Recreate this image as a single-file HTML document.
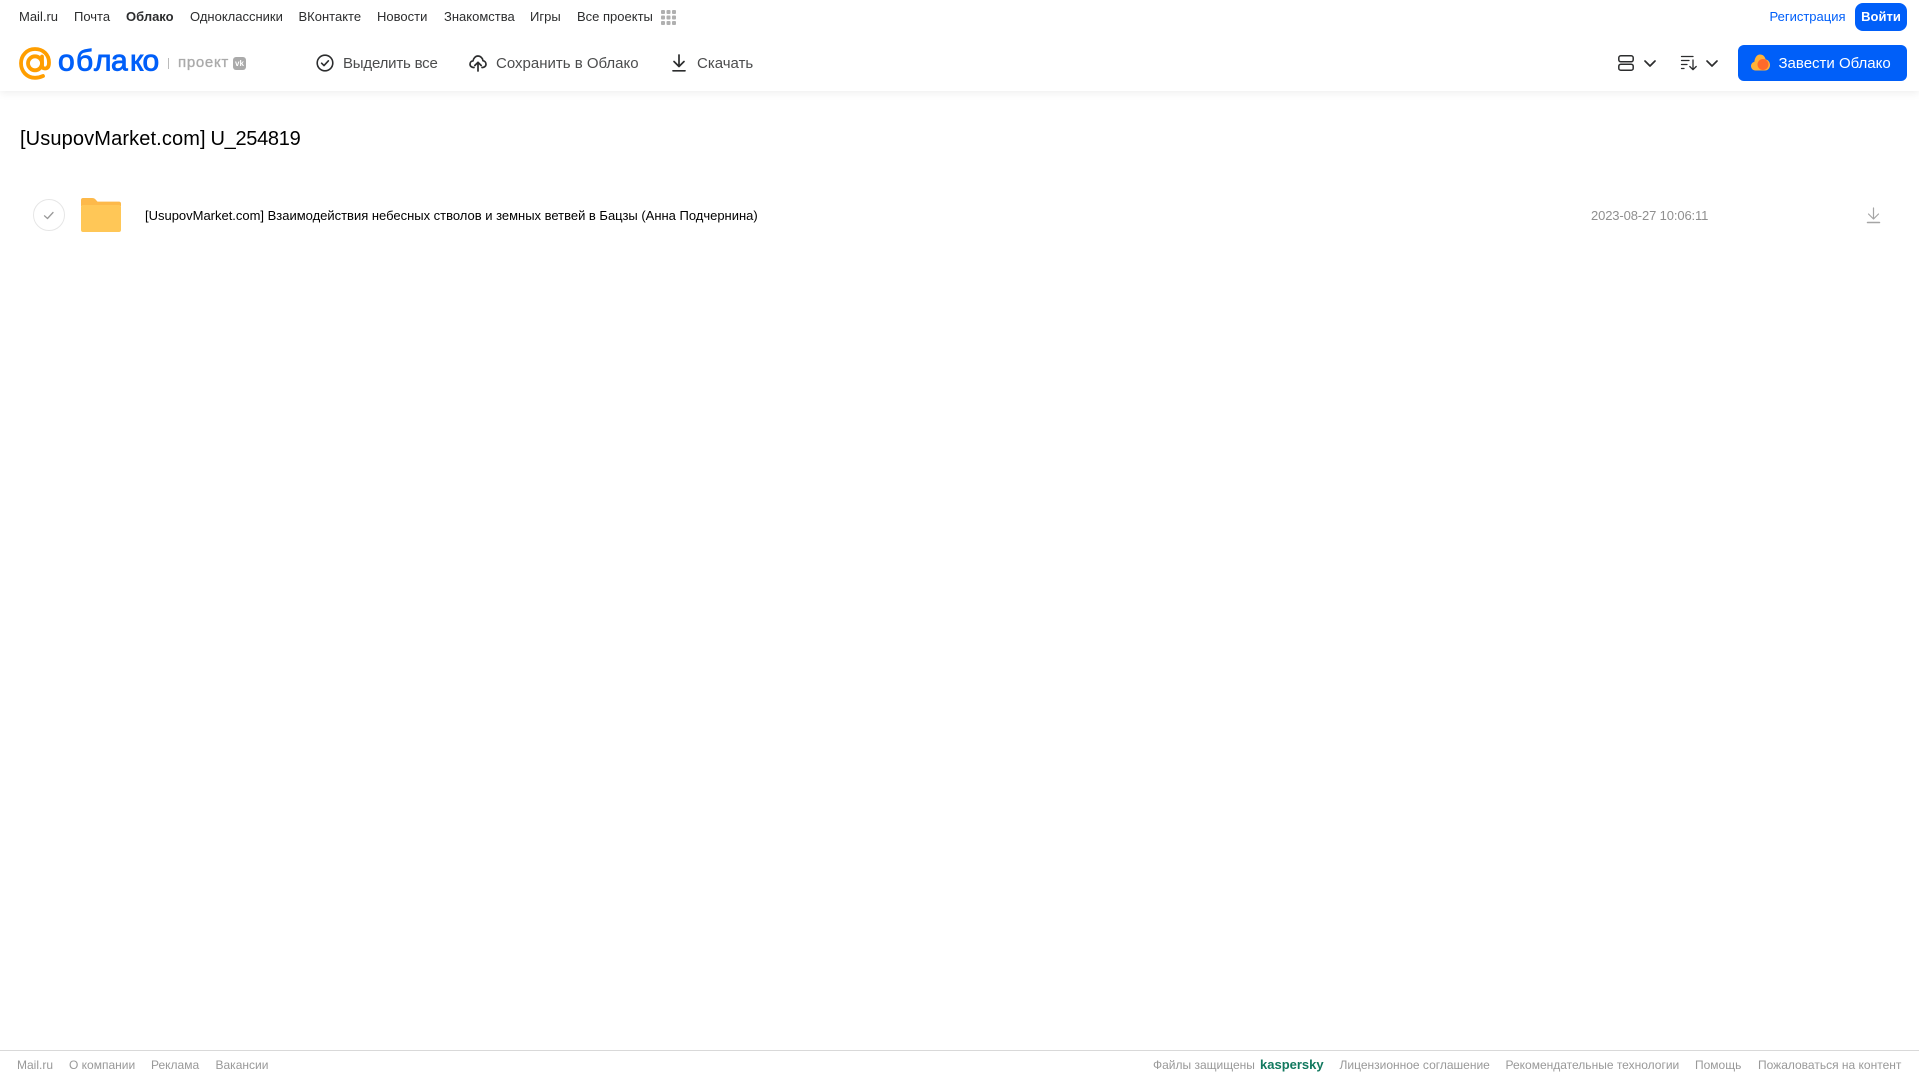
<!DOCTYPE html>
<html lang="ru">
<head>
<meta charset="utf-8">
<title>Облако</title>
<style>
html,body{margin:0;padding:0;background:#fff;}
body{position:relative;width:1919px;height:1079px;overflow:hidden;font-family:"Liberation Sans",sans-serif;}
.t{position:absolute;white-space:nowrap;line-height:20px;}
.n{top:7px;font-size:13px;color:#2c2d2e;}
.b{top:54px;font-size:15px;color:#2c2d2e;opacity:.85;}
.f{top:1055px;font-size:12px;color:#999;}
svg{position:absolute;overflow:visible;}
#hdr{position:absolute;left:0;top:0;width:1919px;height:91px;background:#fff;box-shadow:0 2px 8px rgba(0,0,0,.07);}
</style>
</head>
<body>
<div id="hdr"></div>

<span class="t n" style="left:19px">Mail.ru</span>
<span class="t n" style="left:74px">Почта</span>
<span class="t n" style="left:126px;font-weight:bold">Облако</span>
<span class="t n" style="left:190px">Одноклассники</span>
<span class="t n" style="left:298.5px">ВКонтакте</span>
<span class="t n" style="left:377px">Новости</span>
<span class="t n" style="left:444px">Знакомства</span>
<span class="t n" style="left:530px">Игры</span>
<span class="t n" style="left:577px">Все проекты</span>
<svg style="left:661px;top:10px" width="15" height="15" viewBox="0 0 15 15" fill="#b0b0b0">
<rect x="0" y="0" width="4" height="4" rx="1"/><rect x="5.5" y="0" width="4" height="4" rx="1"/><rect x="11" y="0" width="4" height="4" rx="1"/>
<rect x="0" y="5.5" width="4" height="4" rx="1"/><rect x="5.5" y="5.5" width="4" height="4" rx="1"/><rect x="11" y="5.5" width="4" height="4" rx="1"/>
<rect x="0" y="11" width="4" height="4" rx="1"/><rect x="5.5" y="11" width="4" height="4" rx="1"/><rect x="11" y="11" width="4" height="4" rx="1"/>
</svg>

<span class="t" style="left:1769.5px;top:7px;font-size:13px;color:#005ff9">Регистрация</span>
<div style="position:absolute;left:1855px;top:3px;width:52px;height:28px;border-radius:8px;background:#005ff9;color:#fff;font-size:13px;line-height:27px;text-align:center;font-weight:bold">Войти</div>

<svg style="left:19px;top:47px" width="32" height="33" viewBox="0 0 32 33" fill="none" stroke="#ff9e00">
<circle cx="16" cy="16.3" r="7" stroke-width="3.8"/>
<path d="M23 9.5V18Q23 21.5 26 21.5Q30 21.5 30 15.5C30 7.5 24 2 16 2C8 2 2 8.3 2 16.3C2 24.5 8 30.8 16 30.8Q20 30.8 24 29" stroke-width="3.8" stroke-linecap="round"/>
</svg>
<svg style="left:58px;top:44px" width="102" height="36">
<text x="0 18 36 53 72 84.5" y="26.5" font-family="Liberation Sans,sans-serif" font-size="30" fill="#005ff9" stroke="#005ff9" stroke-width=".9">облако</text>
</svg>
<div style="position:absolute;left:168px;top:58px;width:1px;height:11px;background:#bbb"></div>
<span class="t" style="left:178px;top:53px;font-size:15px;color:#aaa;letter-spacing:.7px;-webkit-text-stroke:.35px #aaa">проект</span>
<div style="position:absolute;left:233px;top:57px;width:13px;height:13px;border-radius:3px;background:#aaa;color:#fff;font-size:8px;line-height:13px;text-align:center;font-weight:bold">vk</div>

<svg style="left:316px;top:54px" width="18" height="18" viewBox="0 0 18 18" fill="none" stroke="#2c2d2e" stroke-width="1.6" stroke-linecap="round" stroke-linejoin="round">
<circle cx="9" cy="9" r="7.8"/><path d="M5.6 9.2L8 11.6L12.4 6.8"/>
</svg>
<span class="t b" style="left:343px;letter-spacing:-.2px">Выделить все</span>
<svg style="left:469px;top:54px" width="18" height="18" viewBox="0 0 18 18" fill="none" stroke="#2c2d2e" stroke-width="1.7" stroke-linecap="round" stroke-linejoin="round">
<path d="M5 13.5H4.5C2.5 13.5 1 12 1 10.2C1 8.4 2.3 7 4 6.9C4.5 4.2 6.5 2 9 2C11.5 2 13.6 4 14 6.7C15.7 7 17 8.4 17 10.2C17 12 15.5 13.5 13.5 13.5H13"/>
<path d="M9 17V8.5M5.8 11.5L9 8.3L12.2 11.5"/>
</svg>
<span class="t b" style="left:496px">Сохранить в Облако</span>
<svg style="left:672px;top:54px" width="14" height="18" viewBox="0 0 14 18" fill="none" stroke="#2c2d2e" stroke-width="1.7" stroke-linecap="round" stroke-linejoin="round">
<path d="M7 1V12M2 7.5L7 12.5L12 7.5"/><path d="M1 16.8H13"/>
</svg>
<span class="t b" style="left:697px">Скачать</span>

<svg style="left:1618px;top:55px" width="16" height="16" viewBox="0 0 16 16" fill="none" stroke="#2c2d2e" stroke-width="1.5">
<rect x=".8" y=".8" width="14.4" height="6" rx="2"/><rect x=".8" y="9.2" width="14.4" height="6" rx="2"/>
</svg>
<svg style="left:1644px;top:60px" width="12" height="7" viewBox="0 0 12 7" fill="none" stroke="#2c2d2e" stroke-width="1.7" stroke-linecap="round" stroke-linejoin="round">
<path d="M1 1L6 6L11 1"/>
</svg>
<svg style="left:1681px;top:55px" width="16" height="16" viewBox="0 0 16 16" fill="none" stroke="#2c2d2e" stroke-width="1.3" stroke-linecap="round" stroke-linejoin="round">
<path d="M.5 1.5H12M.5 5.5H8M.5 9.5H6M.5 13.5H3"/><path d="M12 5V14.5M8.8 11.5L12 14.7L15.2 11.5"/>
</svg>
<svg style="left:1706px;top:60px" width="12" height="7" viewBox="0 0 12 7" fill="none" stroke="#2c2d2e" stroke-width="1.7" stroke-linecap="round" stroke-linejoin="round">
<path d="M1 1L6 6L11 1"/>
</svg>

<div style="position:absolute;left:1738px;top:45px;width:169px;height:36px;border-radius:6px;background:#005ff9"></div>
<svg style="left:1751px;top:54px" width="19" height="17" viewBox="0 0 19 17">
<path d="M4.5 16.5C2 16.5 0 14.5 0 12C0 9.8 1.5 8.2 3.4 7.7C3.8 3.5 6 .5 9 .5C12 .5 14 2.6 14.6 5.4C17 5.8 19 8 19 11C19 14 17 16.5 14 16.5Z" fill="#ffb238"/>
<circle cx="12" cy="10.5" r="5.5" fill="#ff6a2b"/>
</svg>
<span class="t" style="left:1778.5px;top:54px;font-size:15px;color:#fff">Завести Облако</span>

<span class="t" style="left:20px;top:127px;font-size:20px;line-height:24px;color:#000;letter-spacing:.13px">[UsupovMarket.com]</span>
<span class="t" style="left:210.5px;top:127px;font-size:20px;line-height:24px;color:#000;letter-spacing:-.3px">U_254819</span>

<div style="position:absolute;left:33px;top:199px;width:30px;height:30px;border:1px solid #e6e6e6;border-radius:50%"></div>
<svg style="left:43px;top:211px" width="12" height="9" viewBox="0 0 12 9" fill="none" stroke="#999" stroke-width="1.3" stroke-linecap="round" stroke-linejoin="round">
<path d="M1.5 4.8L4.5 7.5L10 1.5"/>
</svg>
<svg style="left:81px;top:198px" width="40" height="34" viewBox="0 0 40 34">
<path d="M2 0H11C13 0 14 .8 15 2L16.5 3.6H38C39.2 3.6 40 4.4 40 5.6V8H0V2C0 .8 .8 0 2 0Z" fill="#fdb94a"/>
<path d="M2 7H38C39.2 7 40 7.8 40 9V32C40 33.2 39.2 34 38 34H2C.8 34 0 33.2 0 32V9C0 7.8 .8 7 2 7Z" fill="#ffc757"/>
</svg>
<span class="t" style="left:145px;top:206px;font-size:13px;color:#000;letter-spacing:-.01px">[UsupovMarket.com] Взаимодействия небесных стволов и земных ветвей в Бацзы (Анна Подчернина)</span>
<span class="t" style="left:1591px;top:206px;font-size:13px;color:#8f8f8f;letter-spacing:-.13px">2023-08-27 10:06:11</span>
<svg style="left:1867px;top:207px" width="13" height="17" viewBox="0 0 13 17" fill="none" stroke="#a5a5a5" stroke-width="1.2" stroke-linecap="round" stroke-linejoin="round">
<path d="M6.5 1V11.5M1.5 7L6.5 12L11.5 7"/><path d="M.5 15.5H12.5" stroke-width="1.5"/>
</svg>

<div style="position:absolute;left:0;top:1050px;width:1919px;height:1px;background:#d9d9d9"></div>
<span class="t f" style="left:17px">Mail.ru</span>
<span class="t f" style="left:69px">О компании</span>
<span class="t f" style="left:151px">Реклама</span>
<span class="t f" style="left:215.5px">Вакансии</span>
<span class="t f" style="left:1153px">Файлы защищены</span>
<span class="t f" style="left:1260px;font-size:13px;font-weight:bold;color:#12795f">kaspersky</span>
<span class="t f" style="left:1339.5px">Лицензионное соглашение</span>
<span class="t f" style="left:1505.5px">Рекомендательные технологии</span>
<span class="t f" style="left:1695px">Помощь</span>
<span class="t f" style="left:1758px">Пожаловаться на контент</span>
</body>
</html>
